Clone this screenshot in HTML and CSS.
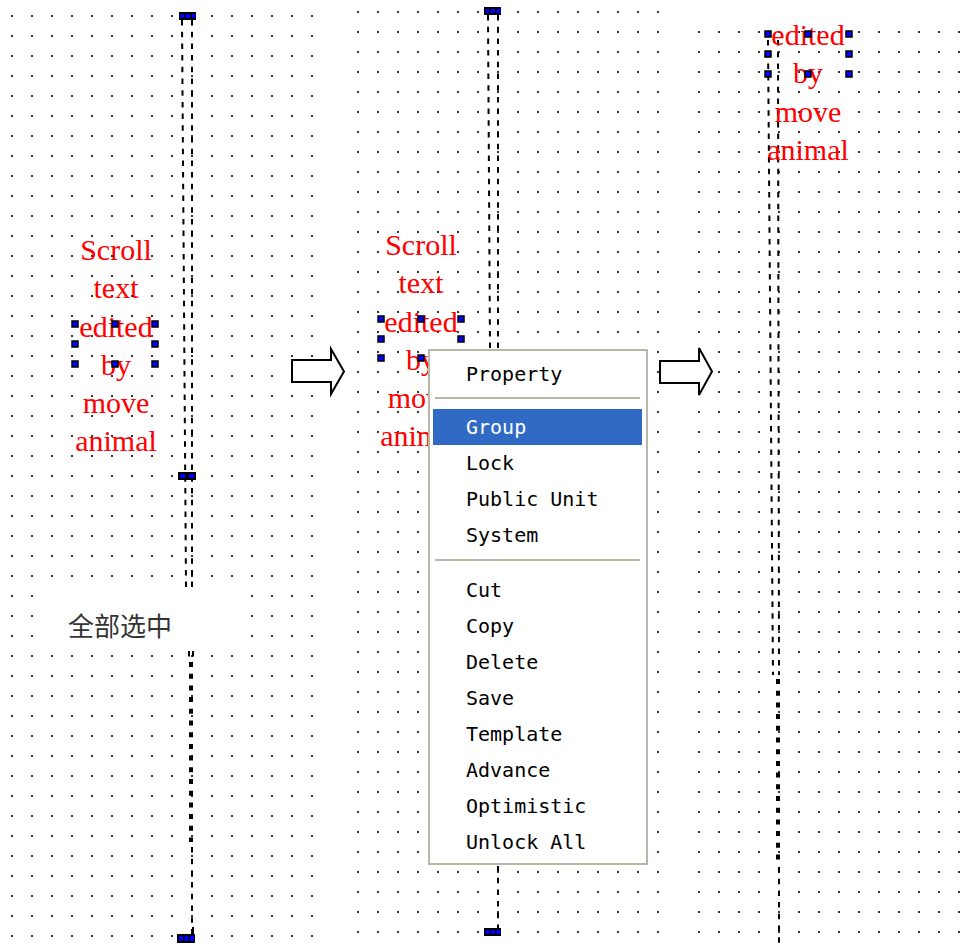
FILE: index.html
```html
<!DOCTYPE html>
<html lang="en">
<head>
    <meta charset="UTF-8">
    <meta name="viewport" content="width=device-width, initial-scale=1.0">
    <title>Scroll text - group</title>
    <link rel="stylesheet" href="styles.css">
</head>
<body>
    <div class="stage">
        <!-- grid, guide lines and arrows -->
        <svg class="canvas" width="974" height="944" viewBox="0 0 974 944">
            <defs>
                <pattern id="dots1" x="2" y="6" width="20" height="20" patternUnits="userSpaceOnUse">
                    <rect class="dot" x="9" y="9" width="2" height="2"/>
                </pattern>
                <pattern id="dots2" x="348" y="2" width="20" height="20" patternUnits="userSpaceOnUse">
                    <rect class="dot" x="9" y="9" width="2" height="2"/>
                </pattern>
                <pattern id="dots3" x="689" y="22" width="20" height="20" patternUnits="userSpaceOnUse">
                    <rect class="dot" x="9" y="9" width="2" height="2"/>
                </pattern>
            </defs>

            <rect x="2" y="6" width="320" height="940" fill="url(#dots1)"/>
            <rect x="348" y="2" width="320" height="940" fill="url(#dots2)"/>
            <rect x="689" y="22" width="285" height="922" fill="url(#dots3)"/>

            <!-- panel 1 -->
            <line class="dash" x1="182" y1="20" x2="186" y2="587"/>
            <line class="dash" x1="192" y1="20" x2="192" y2="587"/>
            <line class="dash" x1="189" y1="651" x2="189" y2="658"/>
            <line class="dash" x1="193" y1="651" x2="193" y2="658"/>
            <line class="dash-thick" x1="191" y1="662" x2="191" y2="842"/>
            <line class="dash" x1="192" y1="847" x2="192" y2="934"/>

            <rect class="grip" x="179" y="12" width="17" height="8"/>
            <rect class="grip-dot" x="180.5" y="14" width="4" height="4"/>
            <rect class="grip-dot" x="186" y="14" width="4" height="4"/>
            <rect class="grip-dot" x="191.5" y="14" width="4" height="4"/>

            <rect class="grip" x="178" y="472" width="18" height="8"/>
            <rect class="grip-dot" x="180" y="474" width="5" height="4"/>
            <rect class="grip-dot" x="189" y="474" width="5" height="4"/>

            <line class="tick" x1="193" y1="927" x2="193" y2="934"/>
            <rect class="grip" x="177" y="934" width="18" height="9"/>
            <rect class="grip-dot" x="179" y="936" width="4" height="5"/>
            <rect class="grip-dot" x="184.5" y="936" width="4" height="5"/>
            <rect class="grip-dot" x="190" y="936" width="4" height="5"/>

            <polygon class="arrow" points="292,360 331,360 331,349 344,371.5 331,394 331,382 292,382"/>

            <!-- panel 2 -->
            <line class="dash" x1="488" y1="15" x2="490" y2="349"/>
            <line class="dash" x1="498" y1="15" x2="498" y2="349"/>
            <line class="dash" x1="498" y1="866" x2="498" y2="928"/>

            <rect class="grip" x="484" y="7" width="17" height="8"/>
            <rect class="grip-dot" x="485.5" y="9" width="4" height="4"/>
            <rect class="grip-dot" x="491" y="9" width="4" height="4"/>
            <rect class="grip-dot" x="496.5" y="9" width="4" height="4"/>

            <rect class="grip" x="484" y="928" width="17" height="8"/>
            <rect class="grip-dot" x="485.5" y="930" width="4" height="4"/>
            <rect class="grip-dot" x="491" y="930" width="4" height="4"/>
            <rect class="grip-dot" x="496.5" y="930" width="4" height="4"/>

            <polygon class="arrow" points="660,361 699,361 699,348 712,371.5 699,395 699,383 660,383"/>

            <!-- panel 3 -->
            <line class="dash" x1="768" y1="40" x2="773" y2="675"/>
            <line class="dash" x1="778" y1="40" x2="779" y2="675"/>
            <line class="dash-thick" x1="778" y1="679" x2="778" y2="861"/>
            <line class="dash" x1="779" y1="867" x2="779" y2="944"/>
        </svg>

        <div class="caption caption-1">Scroll<br>text<br>edited<br>by<br>move<br>animal</div>
        <div class="caption caption-2">Scroll<br>text<br>edited<br>by<br>move<br>animal</div>
        <div class="caption caption-3">edited<br>by<br>move<br>animal</div>

        <!-- selection knobs sit over the text -->
        <svg class="knobs" width="974" height="944" viewBox="0 0 974 944">
            <rect class="knob" x="72" y="321" width="6" height="6"/>
            <rect class="knob" x="112" y="321" width="6" height="6"/>
            <rect class="knob" x="152" y="321" width="6" height="6"/>
            <rect class="knob" x="72" y="341" width="6" height="6"/>
            <rect class="knob" x="152" y="341" width="6" height="6"/>
            <rect class="knob" x="72" y="361" width="6" height="6"/>
            <rect class="knob" x="112" y="361" width="6" height="6"/>
            <rect class="knob" x="152" y="361" width="6" height="6"/>

            <rect class="knob" x="378" y="316" width="6" height="6"/>
            <rect class="knob" x="418" y="316" width="6" height="6"/>
            <rect class="knob" x="458" y="316" width="6" height="6"/>
            <rect class="knob" x="378" y="336" width="6" height="6"/>
            <rect class="knob" x="458" y="336" width="6" height="6"/>
            <rect class="knob" x="378" y="355" width="6" height="6"/>
            <rect class="knob" x="418" y="355" width="6" height="6"/>

            <rect class="knob" x="765" y="31" width="6" height="6"/>
            <rect class="knob" x="805" y="31" width="6" height="6"/>
            <rect class="knob" x="846" y="31" width="6" height="6"/>
            <rect class="knob" x="765" y="51" width="6" height="6"/>
            <rect class="knob" x="846" y="51" width="6" height="6"/>
            <rect class="knob" x="765" y="71" width="6" height="6"/>
            <rect class="knob" x="805" y="71" width="6" height="6"/>
            <rect class="knob" x="846" y="71" width="6" height="6"/>
        </svg>

        <div class="tip">全部选中</div>

        <div class="menu">
            <div class="menu-item">Property</div>
            <div class="menu-sep"></div>
            <div class="menu-item active">Group</div>
            <div class="menu-item">Lock</div>
            <div class="menu-item">Public Unit</div>
            <div class="menu-item">System</div>
            <div class="menu-sep menu-sep-2"></div>
            <div class="menu-item">Cut</div>
            <div class="menu-item">Copy</div>
            <div class="menu-item">Delete</div>
            <div class="menu-item">Save</div>
            <div class="menu-item">Template</div>
            <div class="menu-item">Advance</div>
            <div class="menu-item">Optimistic</div>
            <div class="menu-item">Unlock All</div>
        </div>
    </div>
</body>
</html>
```

FILE: styles.css
```css
* {
    margin: 0;
    padding: 0;
    box-sizing: border-box;
}

body {
    background-color: #fff;
}

.stage {
    position: relative;
    width: 974px;
    height: 944px;
    overflow: hidden;
}

.canvas,
.knobs {
    position: absolute;
    left: 0;
    top: 0;
    display: block;
}

.knobs {
    pointer-events: none;
}

.dot {
    fill: #333;
}

.dash {
    stroke: #000;
    stroke-width: 2;
    stroke-dasharray: 5.5 6.2;
}

.dash-thick {
    stroke: #000;
    stroke-width: 4;
    stroke-dasharray: 5 6.7;
}

.tick {
    stroke: #000;
    stroke-width: 2;
}

.grip {
    fill: #000;
}

.grip-dot {
    fill: #0000ff;
}

.arrow {
    fill: #fff;
    stroke: #000;
    stroke-width: 2;
}

.knob {
    fill: #0000ff;
    stroke: #000;
    stroke-width: 1.5;
}

/* red scroll text */
.caption {
    position: absolute;
    width: 120px;
    text-align: center;
    font-family: "Liberation Serif", serif;
    font-size: 30px;
    line-height: 38.3px;
    color: #ff0000;
    white-space: nowrap;
}

.caption-1 {
    left: 56px;
    top: 231px;
}

.caption-2 {
    left: 361px;
    top: 226px;
}

.caption-3 {
    left: 748px;
    top: 16px;
}

/* white label box */
.tip {
    position: absolute;
    left: 42px;
    top: 588px;
    width: 202px;
    height: 62px;
    padding: 24px 0 0 26px;
    background-color: #fff;
    font-family: "Noto Sans CJK SC", sans-serif;
    font-size: 26px;
    line-height: 26px;
    color: #333;
}

/* context menu */
.menu {
    position: absolute;
    left: 428px;
    top: 349px;
    width: 220px;
    height: 516px;
    padding: 5px 4px 3px 3px;
    border: 2px solid #b9b6a9;
    background-color: #fff;
    font-family: "DejaVu Sans Mono", monospace;
    font-size: 20px;
    color: #000;
}

.menu-item {
    height: 36px;
    line-height: 36px;
    padding-left: 33px;
    white-space: pre;
}

.menu-item.active {
    background-color: #316ac5;
    color: #fff;
}

.menu-sep {
    height: 2px;
    margin: 5px 2px 10px 2px;
    background-color: #b9b6a9;
}

.menu-sep-2 {
    margin: 6px 2px 11px 2px;
}
```
